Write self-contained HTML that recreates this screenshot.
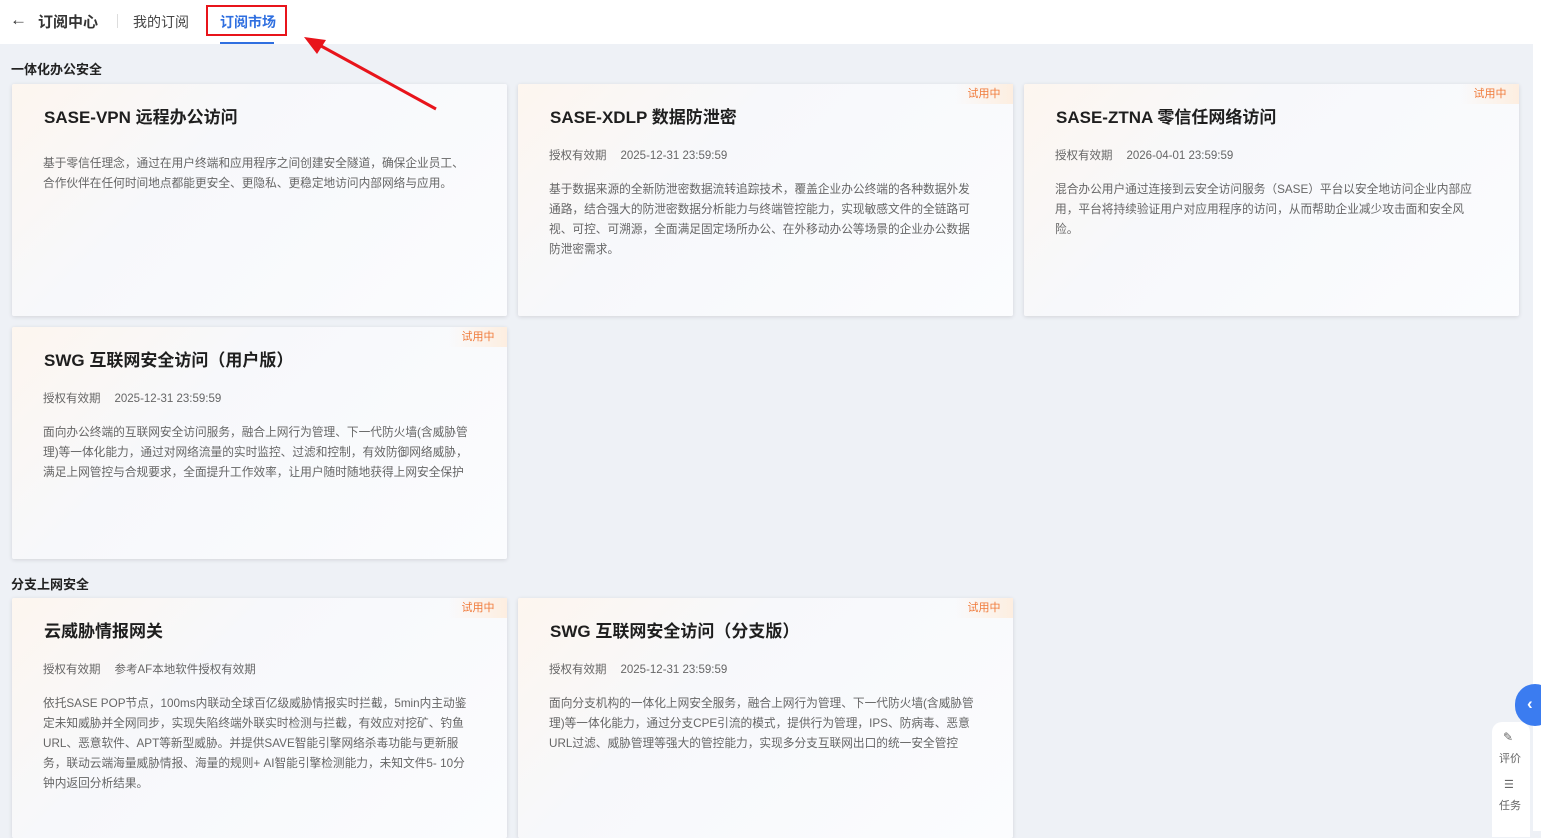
<!DOCTYPE html>
<html><head><meta charset="utf-8"><style>
*{margin:0;padding:0;box-sizing:border-box}
body{width:1541px;height:831px;overflow:hidden;background:#eef1f6;font-family:"Liberation Sans","Noto Sans CJK SC",sans-serif;position:relative;color:#222}
.top{position:absolute;left:0;top:0;width:1533px;height:44px;background:#fff}
.scroll{position:absolute;right:0;top:0;width:8px;height:831px;background:#fff}
.t{position:absolute;white-space:nowrap}
.card{position:absolute;width:495px;height:232px;background:linear-gradient(135deg,#fdf6ef 0%,#f7f8fb 35%,#fbfcfe 100%);box-shadow:0 1px 4px rgba(0,0,0,.12);border-radius:2px}
.card h3{position:absolute;left:32px;top:19px;font-size:17px;font-weight:bold;color:#1e1e1e;white-space:nowrap}
.card .m{position:absolute;left:31px;top:63px;font-size:11.5px;color:#666;white-space:nowrap}
.card .m span{margin-left:14px}
.card p{position:absolute;left:31px;top:96px;font-size:11.7px;line-height:20px;color:#666;white-space:nowrap}
.tag{position:absolute;right:0;top:0;width:58px;height:20px;font-size:11px;color:#f07a3a;text-align:center;line-height:20px;background:linear-gradient(90deg,rgba(255,240,225,0),#fdeee0)}
.sec{position:absolute;left:11px;font-size:13px;font-weight:bold;color:#222}
</style></head><body>
<div class="top"></div>
<div class="scroll"></div>
<div class="t" style="left:10px;top:10px;font-size:17px;color:#333">←</div>
<div class="t" style="left:38px;top:11px;font-size:15px;color:#333;font-weight:bold">订阅中心</div>
<div style="position:absolute;left:117px;top:14px;width:1px;height:14px;background:#ddd"></div>
<div class="t" style="left:133px;top:12px;font-size:14px;color:#444">我的订阅</div>
<div class="t" style="left:220px;top:12px;font-size:14px;color:#2f6fe0;font-weight:bold">订阅市场</div>
<div style="position:absolute;left:220px;top:42px;width:54px;height:2px;background:#2f6fe0"></div>
<div style="position:absolute;left:206px;top:5px;width:81px;height:31px;border:2px solid #e8141b"></div>

<div class="sec" style="top:59px">一体化办公安全</div>
<div class="card" style="left:12px;top:84px"><h3>SASE-VPN 远程办公访问</h3><p style="top:70px">基于零信任理念，通过在用户终端和应用程序之间创建安全隧道，确保企业员工、<br>合作伙伴在任何时间地点都能更安全、更隐私、更稳定地访问内部网络与应用。</p></div>
<div class="card" style="left:518px;top:84px"><div class="tag">试用中</div><h3>SASE-XDLP 数据防泄密</h3><div class="m">授权有效期<span>2025-12-31 23:59:59</span></div><p>基于数据来源的全新防泄密数据流转追踪技术，覆盖企业办公终端的各种数据外发<br>通路，结合强大的防泄密数据分析能力与终端管控能力，实现敏感文件的全链路可<br>视、可控、可溯源，全面满足固定场所办公、在外移动办公等场景的企业办公数据<br>防泄密需求。</p></div>
<div class="card" style="left:1024px;top:84px"><div class="tag">试用中</div><h3>SASE-ZTNA 零信任网络访问</h3><div class="m">授权有效期<span>2026-04-01 23:59:59</span></div><p>混合办公用户通过连接到云安全访问服务（SASE）平台以安全地访问企业内部应<br>用，平台将持续验证用户对应用程序的访问，从而帮助企业减少攻击面和安全风<br>险。</p></div>
<div class="card" style="left:12px;top:327px"><div class="tag">试用中</div><h3>SWG 互联网安全访问（用户版）</h3><div class="m">授权有效期<span>2025-12-31 23:59:59</span></div><p>面向办公终端的互联网安全访问服务，融合上网行为管理、下一代防火墙(含威胁管<br>理)等一体化能力，通过对网络流量的实时监控、过滤和控制，有效防御网络威胁，<br>满足上网管控与合规要求，全面提升工作效率，让用户随时随地获得上网安全保护</p></div>

<div class="sec" style="top:574px">分支上网安全</div>
<div class="card" style="left:12px;top:598px;height:240px"><div class="tag">试用中</div><h3>云威胁情报网关</h3><div class="m">授权有效期<span>参考AF本地软件授权有效期</span></div><p>依托SASE POP节点，100ms内联动全球百亿级威胁情报实时拦截，5min内主动鉴<br>定未知威胁并全网同步，实现失陷终端外联实时检测与拦截，有效应对挖矿、钓鱼<br>URL、恶意软件、APT等新型威胁。并提供SAVE智能引擎网络杀毒功能与更新服<br>务，联动云端海量威胁情报、海量的规则+ AI智能引擎检测能力，未知文件5- 10分<br>钟内返回分析结果。</p></div>
<div class="card" style="left:518px;top:598px;height:240px"><div class="tag">试用中</div><h3>SWG 互联网安全访问（分支版）</h3><div class="m">授权有效期<span>2025-12-31 23:59:59</span></div><p>面向分支机构的一体化上网安全服务，融合上网行为管理、下一代防火墙(含威胁管<br>理)等一体化能力，通过分支CPE引流的模式，提供行为管理，IPS、防病毒、恶意<br>URL过滤、威胁管理等强大的管控能力，实现多分支互联网出口的统一安全管控</p></div>

<svg style="position:absolute;left:300px;top:35px;z-index:5" width="140" height="80"><line x1="136" y1="74" x2="12" y2="6" stroke="#e8141b" stroke-width="3"/><polygon points="4,2 26,5 17,19" fill="#e8141b"/></svg>

<div style="position:absolute;left:1515px;top:684px;width:40px;height:42px;border-radius:21px;background:#3b7cf0"></div>
<div class="t" style="left:1527px;top:694px;color:#fff;font-size:17px;font-weight:bold">‹</div>
<div style="position:absolute;left:1492px;top:722px;width:38px;height:115px;background:#fff;border-radius:10px 10px 0 0"></div>
<div class="t" style="left:1503px;top:730px;font-size:12px;color:#666">✎</div>
<div class="t" style="left:1499px;top:750px;font-size:11px;color:#666">评价</div>
<div class="t" style="left:1504px;top:778px;font-size:11px;color:#666">☰</div>
<div class="t" style="left:1499px;top:797px;font-size:11px;color:#666">任务</div>
</body></html>
